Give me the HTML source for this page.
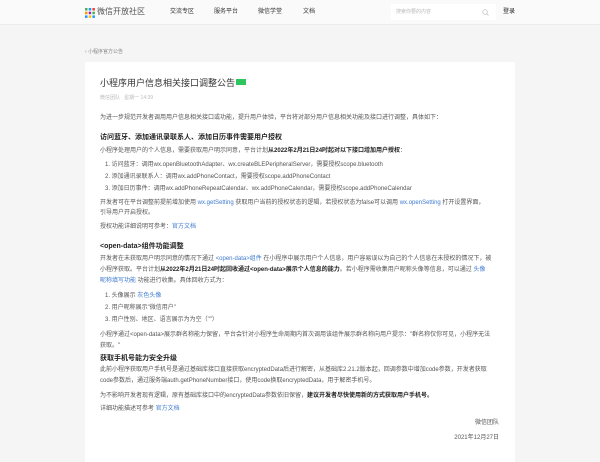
<!DOCTYPE html>
<html><head><meta charset="utf-8"><style>
*{margin:0;padding:0;box-sizing:border-box}
body{width:600px;height:447px;overflow:hidden;background:#f5f5f5;font-family:"Liberation Sans","Noto Sans CJK SC",sans-serif;color:#444;position:relative}
.hd{position:absolute;left:0;top:0;width:600px;height:25px;background:#fafafa;border-bottom:1px solid #ececec}
.a{position:absolute;white-space:nowrap;line-height:1}
.card{position:absolute;left:85px;top:62px;width:430px;height:400px;background:#fff}
.t{font-size:6px;color:#555}
.b{font-weight:bold;color:#222}
.h{font-size:7px;font-weight:bold;color:#222}
.l{color:#3f7bd0}
</style></head><body>
<div class="hd">
<svg class="a" style="left:85px;top:8px" width="10" height="10" viewBox="0 0 10 10">
<rect x="0" y="0" width="2.5" height="2.5" fill="#4caf50"/><rect x="3.7" y="0" width="2.5" height="2.5" fill="#2196f3"/><rect x="7.4" y="0" width="2.5" height="2.5" fill="#f44336"/>
<rect x="0" y="3.7" width="2.5" height="2.5" fill="#ff9800"/><rect x="3.7" y="3.7" width="2.5" height="2.5" fill="#9c27b0"/><rect x="7.4" y="3.7" width="2.5" height="2.5" fill="#4caf50"/>
<rect x="0" y="7.4" width="2.5" height="2.5" fill="#2196f3"/><rect x="3.7" y="7.4" width="2.5" height="2.5" fill="#ffc107"/><rect x="7.4" y="7.4" width="2.5" height="2.5" fill="#2196f3"/></svg>
<div class="a" style="left:97px;top:8px;font-size:8px;color:#555">微信开放社区</div>
<div class="a" style="left:170px;top:9px;font-size:6px;color:#333">交流专区</div>
<div class="a" style="left:214px;top:9px;font-size:6px;color:#333">服务平台</div>
<div class="a" style="left:258px;top:9px;font-size:6px;color:#333">微信学堂</div>
<div class="a" style="left:303px;top:9px;font-size:6px;color:#333">文档</div>
<div class="a" style="left:391px;top:4px;width:105px;height:16px;background:#fff"></div>
<div class="a" style="left:396px;top:10px;font-size:5px;color:#bbb">搜索你要的内容</div>
<svg class="a" style="left:482px;top:9px" width="7" height="7" viewBox="0 0 7 7"><circle cx="3" cy="3" r="2.3" fill="none" stroke="#bbb" stroke-width=".7"/><line x1="4.7" y1="4.7" x2="6.5" y2="6.5" stroke="#bbb" stroke-width=".7"/></svg>
<div class="a" style="left:503px;top:9px;font-size:6px;color:#222">登录</div>
</div>
<div class="a" style="left:85px;top:50px;font-size:5px;color:#888">‹ 小程序官方公告</div>
<div class="card"></div>
<div class="a" style="left:100px;top:79px;font-size:9px;color:#333">小程序用户信息相关接口调整公告<span style="display:inline-block;width:10px;height:6px;background:#2ec45e;margin-left:1px;vertical-align:1px"></span></div>
<div class="a" style="left:100px;top:96px;font-size:5px;color:#bbb">微信团队 &nbsp; 星期一 14:39</div>
<div class="a t" style="left:100px;top:115px">为进一步规范开发者调用用户信息相关接口或功能，提升用户体验，平台将对部分用户信息相关功能及接口进行调整，具体如下：</div>
<div class="a h" style="left:100px;top:134px">访问蓝牙、添加通讯录联系人、添加日历事件需要用户授权</div>
<div class="a t" style="left:100px;top:148px">小程序处理用户的个人信息，需要获取用户明示同意，平台计划<span class="b">从2022年2月21日24时起对以下接口增加用户授权</span>：</div>
<div class="a t" style="left:105px;top:162px">1. 访问蓝牙：调用wx.openBluetoothAdapter、wx.createBLEPeripheralServer，需要授权scope.bluetooth</div>
<div class="a t" style="left:105px;top:174px">2. 添加通讯录联系人：调用wx.addPhoneContact，需要授权scope.addPhoneContact</div>
<div class="a t" style="left:105px;top:186px">3. 添加日历事件：调用wx.addPhoneRepeatCalendar、wx.addPhoneCalendar，需要授权scope.addPhoneCalendar</div>
<div class="a t" style="left:100px;top:200px">开发者可在平台调整前提前增加使用 <span class="l">wx.getSetting</span> 获取用户当前的授权状态的逻辑，若授权状态为false可以调用 <span class="l">wx.openSetting</span> 打开设置界面，</div>
<div class="a t" style="left:100px;top:210px">引导用户开启授权。</div>
<div class="a t" style="left:100px;top:224px">授权功能详细说明可参考：<span class="l">官方文档</span></div>
<div class="a h" style="left:100px;top:243px">&lt;open-data&gt;组件功能调整</div>
<div class="a t" style="left:100px;top:256px">开发者在未获取用户明示同意的情况下通过 <span class="l">&lt;open-data&gt;组件</span> 在小程序中展示用户个人信息，用户容易误以为自己的个人信息在未授权的情况下，被</div>
<div class="a t" style="left:100px;top:267px">小程序获取。平台计划<span class="b">从2022年2月21日24时起回收通过&lt;open-data&gt;展示个人信息的能力</span>。若小程序需收集用户昵称头像等信息，可以通过 <span class="l">头像</span></div>
<div class="a t" style="left:100px;top:278px"><span class="l">昵称填写功能</span> 功能进行收集。具体回收方式为：</div>
<div class="a t" style="left:105px;top:293px">1. 头像展示 <span class="l">灰色头像</span></div>
<div class="a t" style="left:105px;top:305px">2. 用户昵称展示"微信用户"</div>
<div class="a t" style="left:105px;top:317px">3. 用户性别、地区、语言展示为为空（""）</div>
<div class="a t" style="left:100px;top:332px">小程序通过&lt;open-data&gt;展示群名称能力保留，平台会针对小程序生命周期内首次调用该组件展示群名称向用户提示："群名称仅你可见，小程序无法</div>
<div class="a t" style="left:100px;top:343px">获取。"</div>
<div class="a h" style="left:100px;top:355px">获取手机号能力安全升级</div>
<div class="a t" style="left:100px;top:367px">此前小程序获取用户手机号是通过基础库接口直接获取encryptedData后进行解密，从基础库2.21.2版本起，回调参数中增加code参数，开发者获取</div>
<div class="a t" style="left:100px;top:378px">code参数后，通过服务端auth.getPhoneNumber接口，使用code换取encryptedData，用于解密手机号。</div>
<div class="a t" style="left:100px;top:393px">为不影响开发者现有逻辑，原有基础库接口中的encryptedData参数依旧保留，<span class="b">建议开发者尽快使用新的方式获取用户手机号。</span></div>
<div class="a t" style="left:100px;top:406px">详细功能描述可参考 <span class="l">官方文档</span></div>
<div class="a t" style="right:101px;top:420px">微信团队</div>
<div class="a t" style="right:101px;top:435px">2021年12月27日</div>
</body></html>
